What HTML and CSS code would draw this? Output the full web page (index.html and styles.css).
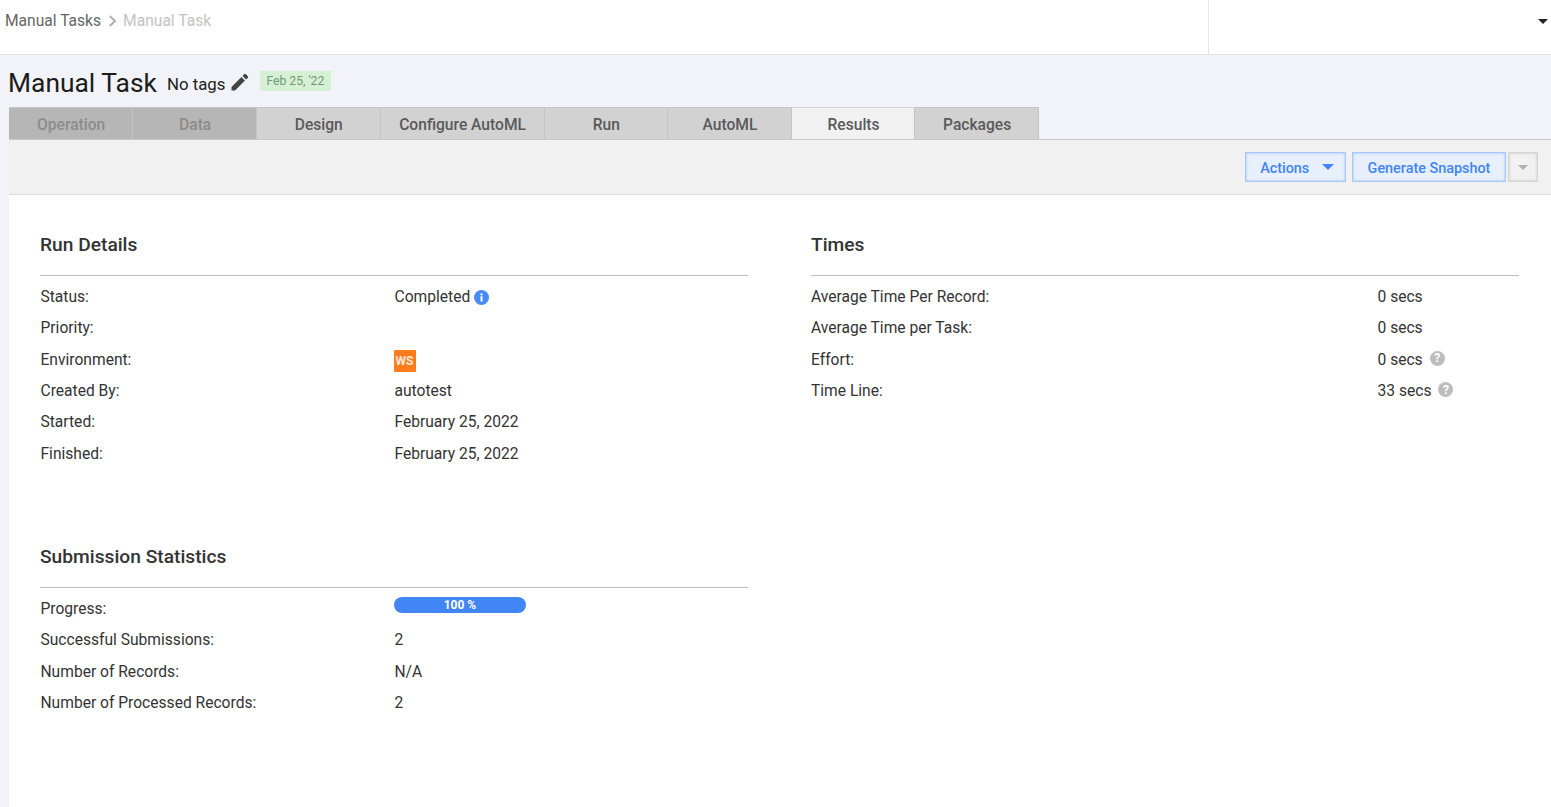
FILE: index.html
```html
<!DOCTYPE html>
<html lang="en">
<head>
    <meta charset="UTF-8">
    <title>Manual Task</title>
    <link rel="stylesheet" href="styles.css">
</head>
<body>

    <div class="topbar">
        <div class="crumbs">
            <a class="crumb">Manual Tasks</a>
            <svg class="crumb-sep" width="10" height="14" viewBox="0 0 10 14"><path d="M1.8 2 L7 7 L1.8 12" fill="none" stroke="#b0b0b0" stroke-width="2"/></svg>
            <span class="crumb-current">Manual Task</span>
        </div>
        <div class="user-menu"><span class="caret-black"></span></div>
    </div>

    <div class="title-row">
        <h1>Manual Task</h1>
        <span class="tags">No tags</span>
        <svg class="pencil" width="20" height="20" viewBox="0 0 20 20"><path fill="#444" d="M1.5 14.9V18.5h3.6L15 8.6 11.4 5 1.5 14.9zM17.9 5.7a1 1 0 0 0 0-1.4l-2.2-2.2a1 1 0 0 0-1.4 0l-1.8 1.8 3.6 3.6 1.8-1.8z"/></svg>
        <span class="date-tag">Feb 25, '22</span>
    </div>

    <div class="tabs">
        <div class="tab first disabled">Operation</div>
        <div class="tab disabled">Data</div>
        <div class="tab">Design</div>
        <div class="tab wide">Configure AutoML</div>
        <div class="tab">Run</div>
        <div class="tab">AutoML</div>
        <div class="tab active">Results</div>
        <div class="tab">Packages</div>
    </div>

    <div class="toolbar">
        <button class="btn btn-actions">Actions <span class="caret-blue"></span></button>
        <button class="btn btn-snapshot">Generate Snapshot</button>
        <button class="btn-more"><span class="caret-grey"></span></button>
    </div>

    <div class="content">
        <div class="column">
            <section class="details">
                <h2>Run Details</h2>
                <div class="row"><span class="label">Status:</span><span class="value">Completed
                    <svg class="info" width="15" height="15" viewBox="0 0 15 15"><circle cx="7.5" cy="7.5" r="7.5" fill="#4b8bf5"/><rect x="6.5" y="6.2" width="2" height="5.3" fill="#fff"/><rect x="6.5" y="3.4" width="2" height="1.9" fill="#fff"/></svg></span></div>
                <div class="row"><span class="label">Priority:</span><span class="value"></span></div>
                <div class="row"><span class="label">Environment:</span><span class="value"><span class="env-badge">WS</span></span></div>
                <div class="row"><span class="label">Created By:</span><span class="value">autotest</span></div>
                <div class="row"><span class="label">Started:</span><span class="value">February 25, 2022</span></div>
                <div class="row"><span class="label">Finished:</span><span class="value">February 25, 2022</span></div>
            </section>

            <section class="details stats">
                <h2>Submission Statistics</h2>
                <div class="row"><span class="label">Progress:</span><span class="value"><span class="progress">100 %</span></span></div>
                <div class="row"><span class="label">Successful Submissions:</span><span class="value">2</span></div>
                <div class="row"><span class="label">Number of Records:</span><span class="value">N/A</span></div>
                <div class="row"><span class="label">Number of Processed Records:</span><span class="value">2</span></div>
            </section>
        </div>

        <div class="column">
            <section class="details times">
                <h2>Times</h2>
                <div class="row"><span class="label">Average Time Per Record:</span><span class="value">0 secs</span></div>
                <div class="row"><span class="label">Average Time per Task:</span><span class="value">0 secs</span></div>
                <div class="row"><span class="label">Effort:</span><span class="value">0 secs <span class="help">?</span></span></div>
                <div class="row"><span class="label">Time Line:</span><span class="value">33 secs <span class="help">?</span></span></div>
            </section>
        </div>
    </div>

</body>
</html>
```

FILE: styles.css
```css
html, body { height: 100%; }
body { margin: 0; font-family: Roboto, sans-serif; font-size: 15.6px; color: #333; background: #f1f3f8; overflow: hidden; display: flex; flex-direction: column; }

.topbar { height: 54px; flex: none; background: #fff; border-bottom: 1px solid #e4e4e4; display: flex; justify-content: space-between; }
.crumbs { display: flex; align-items: center; gap: 7px; padding: 0 0 12px 5px; font-size: 15.6px; }
.crumb { color: #666; }
.crumb-sep { margin-right: -2px; }
.crumb-current { color: #c4c4c4; }
.user-menu { width: 343px; border-left: 1px solid #e4e4e4; display: flex; justify-content: flex-end; padding: 19px 3px 0 0; box-sizing: border-box; }
.caret-black { width: 0; height: 0; border: 5px solid transparent; border-top-color: #222; border-bottom: 0; }

.title-row { height: 52px; flex: none; box-sizing: border-box; padding: 4px 0 0 8px; display: flex; align-items: center; }
h1 { margin: 0; font-size: 26.4px; font-weight: 400; color: #1c1c1c; }
.tags { margin-left: 10px; font-size: 16.8px; color: #222; position: relative; top: 1px; }
.pencil { margin-left: 5px; position: relative; top: -1px; }
.date-tag { margin-left: 10px; padding: 0 7px 0 6px; height: 20px; line-height: 20px; background: #d6f0d3; color: #6f9a72; font-size: 12.2px; position: relative; top: -2px; }

.tabs { flex: none; display: flex; margin-left: 9px; height: 33px; box-sizing: border-box; }
.tab { width: 123.6px; height: 33px; box-sizing: border-box; padding: 2px 0 0 1px; background: #d2d2d2; border: 1px solid #c4c4c4; border-left: 0; font-weight: 500; color: #5a5a5a; display: flex; align-items: center; justify-content: center; }
.tab.first { width: 124.4px; }
.tab.wide { width: 164px; }
.tab.disabled { background: #b6b6b6; color: #8c8c8c; }
.tab.active { background: #f1f1f1; border-bottom-color: #f1f1f1; border-top-color: #d8d8d8; }

.toolbar { flex: none; height: 56px; box-sizing: border-box; margin-left: 9px; background: #f1f1f1; border-top: 1px solid #c8c8c8; border-bottom: 1px solid #dcdcdc; margin-top: -1px; display: flex; align-items: center; justify-content: flex-end; padding: 0 13px 0 0; gap: 6px; }
.btn { height: 30px; background: #e8f0fe; border: 1px solid #a9c6f7; box-shadow: inset 0 0 2px 1px #c3d8fb; color: #4285f4; font-family: inherit; font-size: 14.4px; font-weight: 500; padding: 2px 0 0; }
.btn-actions { width: 101px; padding-left: 3px; }
.btn-snapshot { width: 154px; }
.caret-blue { display: inline-block; width: 0; height: 0; margin-left: 9px; vertical-align: 3px; border: 6px solid transparent; border-top: 6px solid #4285f4; border-bottom: 0; }
.btn-more { width: 30px; height: 30px; margin-left: -4px; background: #f1f1f1; border: 1px solid #d4d4d4; box-shadow: inset 0 0 2px 1px #dadada; padding: 0; display: flex; align-items: center; justify-content: center; }
.caret-grey { width: 0; height: 0; border: 5px solid transparent; border-top-color: #b0b0b0; border-bottom: 0; }

.content { flex: 1; margin-left: 9px; background: #fff; padding: 0 32px 0 31px; display: grid; grid-template-columns: 708px 708px; column-gap: 63px; }
.details { padding-top: 33px; }
.stats { padding-top: 70.5px; }
h2 { margin: 0 0 5.5px; height: 48px; box-sizing: border-box; border-bottom: 1px solid #bdbdbd; font-size: 19.2px; font-weight: 500; color: #333; line-height: 33px; }
.stats h2 { margin-bottom: 5.3px; }
.row { display: grid; grid-template-columns: 354px 1fr; height: 31.33px; align-items: center; padding-left: 0.5px; }
.times .row { grid-template-columns: 566.5px 1fr; padding-left: 0; }
.value { display: flex; align-items: center; gap: 4px; }
.env-badge { width: 22px; height: 22px; margin: 3px 0 0 -1px; border-radius: 1px; background: #ff7d1f; color: #fde9da; font-size: 12px; font-weight: 700; display: flex; align-items: center; justify-content: center; }
.help { width: 15px; height: 15px; margin: -3px 0 0 3px; border-radius: 50%; background: #bdbdbd; color: #fff; font-size: 12px; font-weight: 700; display: flex; align-items: center; justify-content: center; }
.progress { width: 132px; height: 16px; margin: -8px 0 0 -1px; padding-left: 1px; box-sizing: border-box; border-radius: 8px; background: #4285f4; color: #fff; font-size: 12px; font-weight: 700; display: flex; align-items: center; justify-content: center; }
```
